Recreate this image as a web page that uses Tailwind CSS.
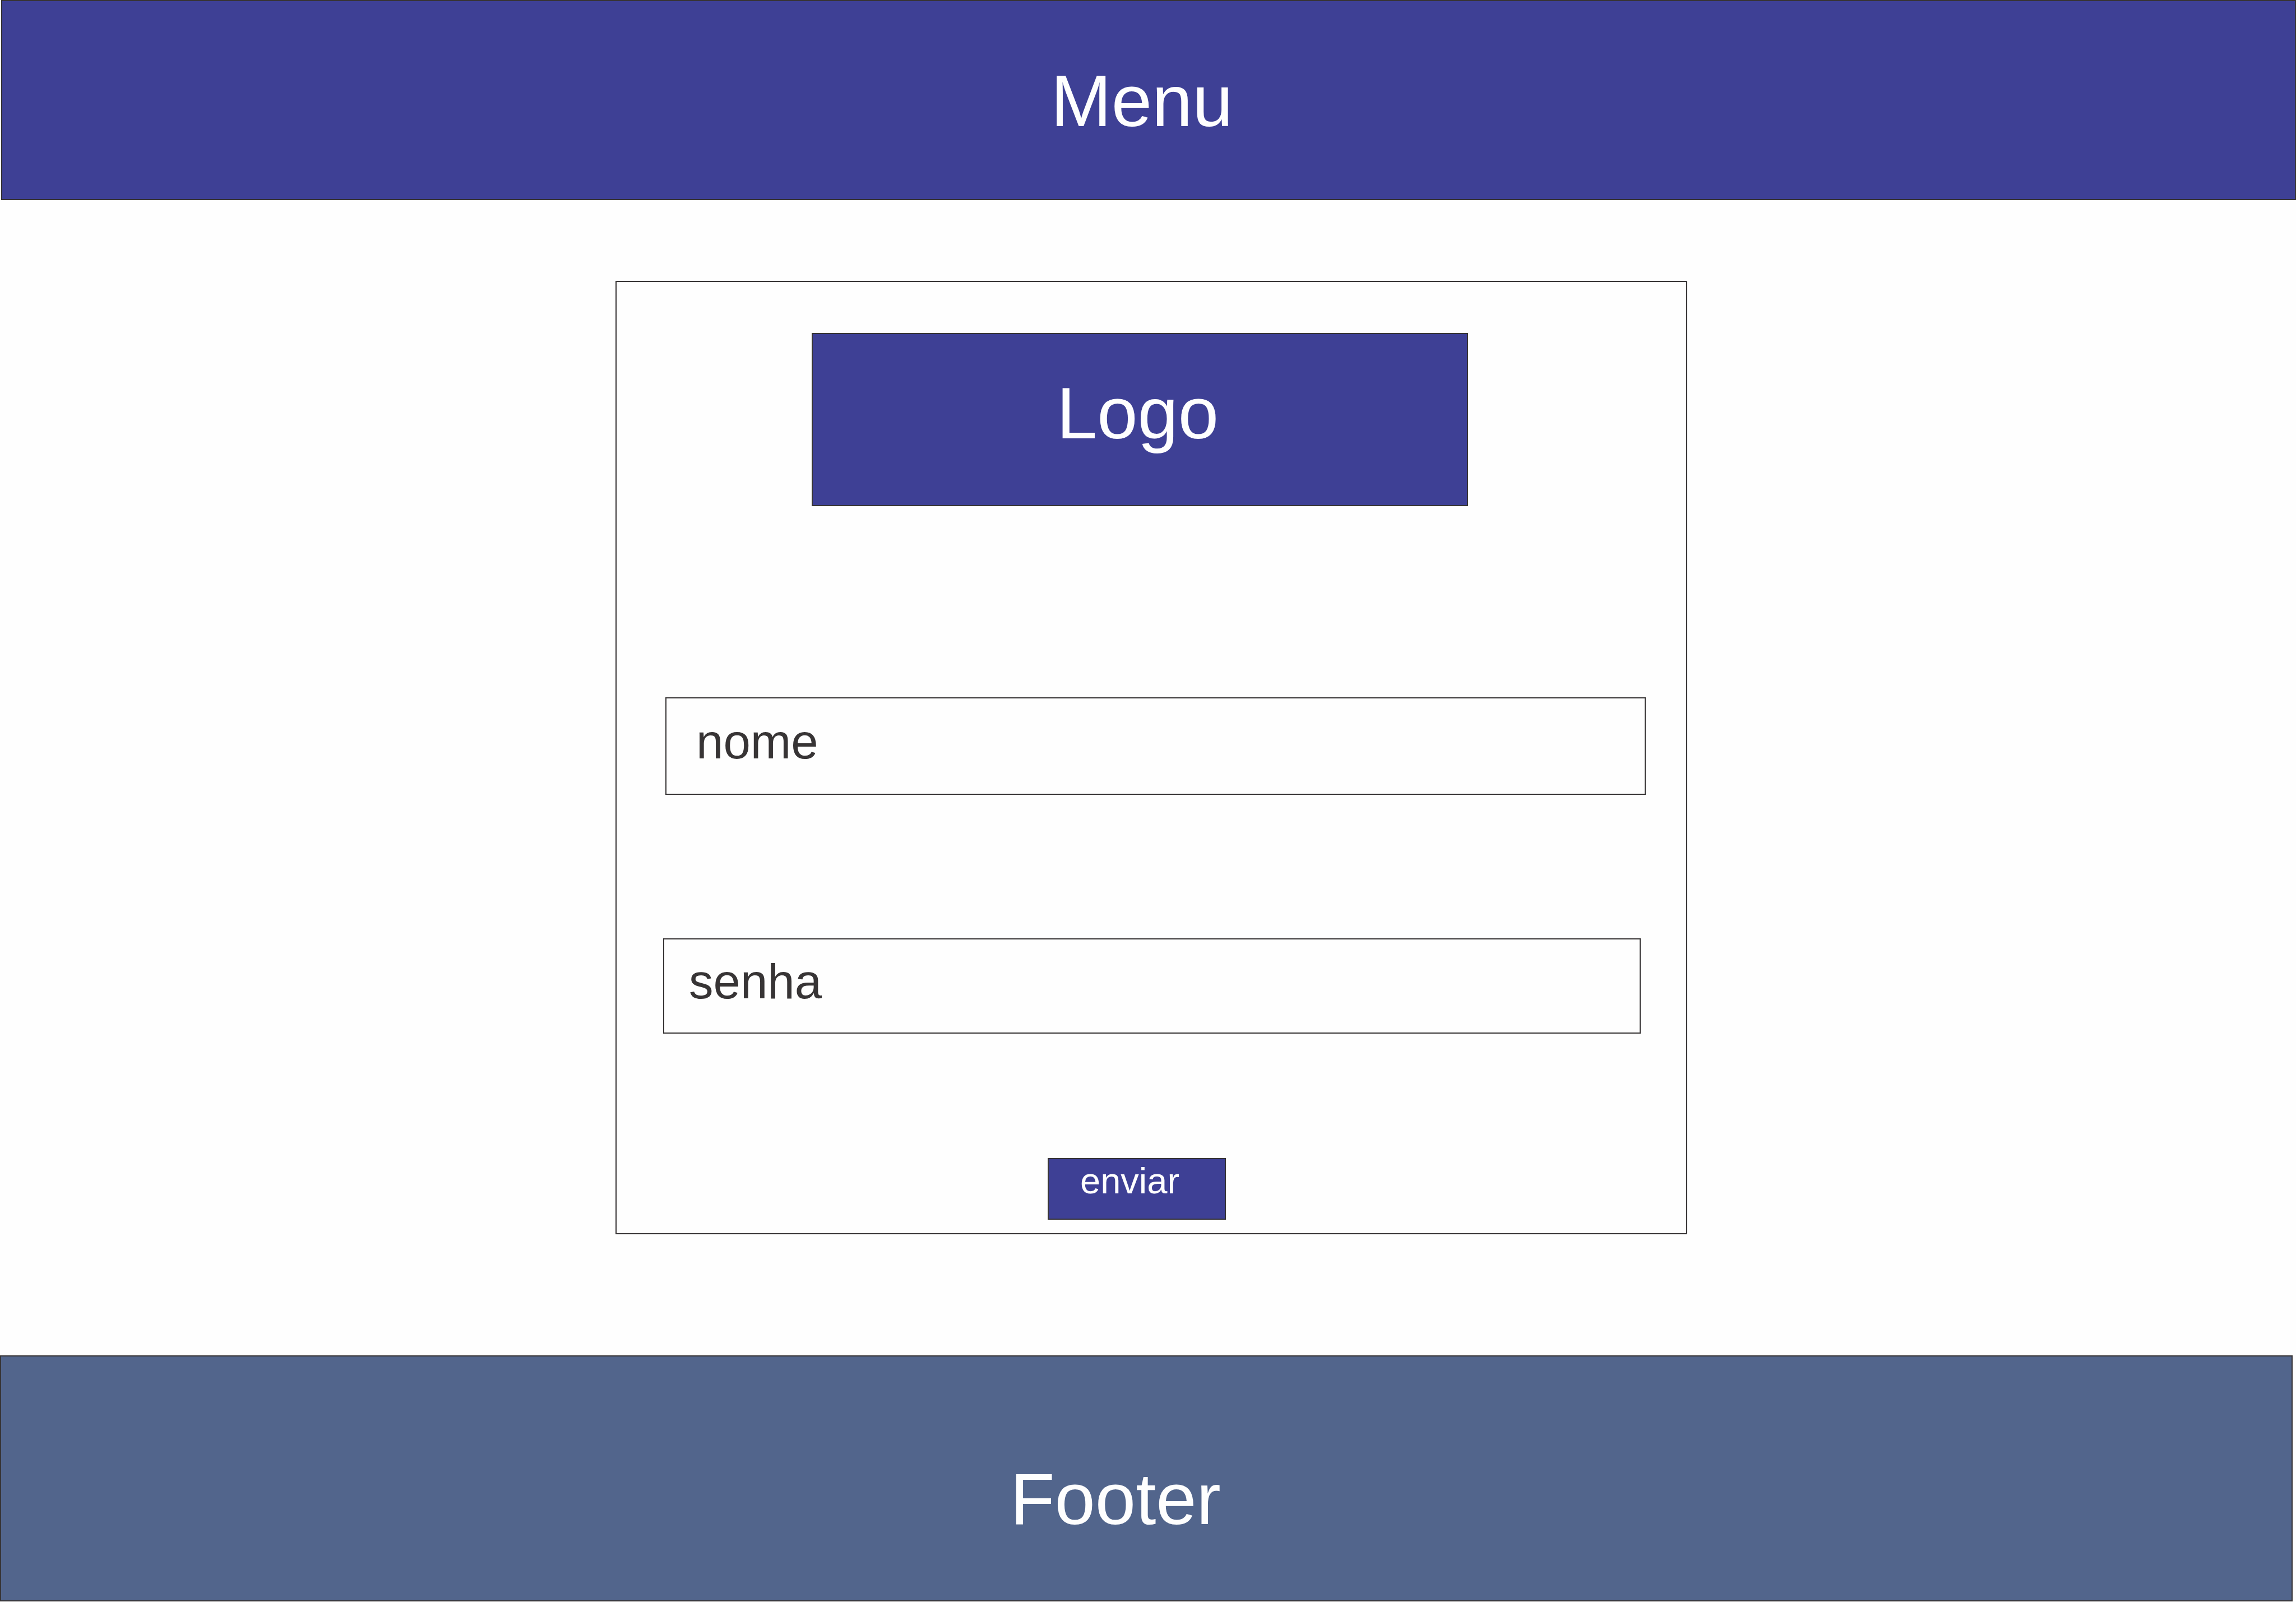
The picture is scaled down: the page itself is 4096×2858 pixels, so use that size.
<!DOCTYPE html>
<html lang="pt-BR">
<head>
<meta charset="utf-8">
<meta name="viewport" content="width=device-width, initial-scale=1">
<title>Login</title>
<script src="https://cdn.jsdelivr.net/npm/@tailwindcss/browser@4"></script>
</head>
<body class="flex min-h-screen flex-col bg-[#fefefe] font-['Liberation_Sans',Arial,sans-serif] text-[#373435]">
  <header class="ml-0.5 border-2 border-[#373435] bg-[#3e4095] pt-[105px] pr-6 pb-[102px] text-center text-[130px] leading-[146px] text-[#fefefe]">
    <nav>Menu</nav>
  </header>

  <main class="flex grow justify-center pt-36 pb-[216px] pl-3">
    <form class="flex w-[1912px] max-w-full flex-col items-start self-start border-2 border-[#373435] pt-[91px] pr-[72px] pb-6 pl-[83px]">
      <h1 class="ml-[265px] w-[1171px] max-w-full border-2 border-[#373435] bg-[#3e4095] pt-[68px] pr-2 pb-[91px] text-center text-[130px] leading-[146px] text-[#fefefe]">Logo</h1>

      <input id="nome" name="nome" type="text" aria-label="nome" placeholder="nome" class="mt-[341px] ml-1 w-[1749px] max-w-full border-2 border-[#373435] pt-7 pb-11 pl-[53px] text-[87px] leading-[98px] placeholder:text-[#373435] placeholder:opacity-100">

      <input id="senha" name="senha" type="password" aria-label="senha" placeholder="senha" class="mt-64 w-[1744px] max-w-full border-2 border-[#373435] pt-[26px] pb-[42px] pl-11 text-[87px] leading-[98px] placeholder:text-[#373435] placeholder:opacity-100">

      <button type="submit" class="mt-[222px] ml-[686px] w-[318px] border-2 border-[#373435] bg-[#3e4095] pt-[3px] pb-[31px] pl-14 text-left text-[65px] leading-[72px] text-[#fefefe]">enviar</button>
    </form>
  </main>

  <footer class="mr-1.5 mb-px border-2 border-[#373435] bg-[#52658c] pt-[181px] pr-[110px] pb-[108px] text-center text-[130px] leading-[146px] text-[#fefefe]">
    <p>Footer</p>
  </footer>
</body>
</html>
